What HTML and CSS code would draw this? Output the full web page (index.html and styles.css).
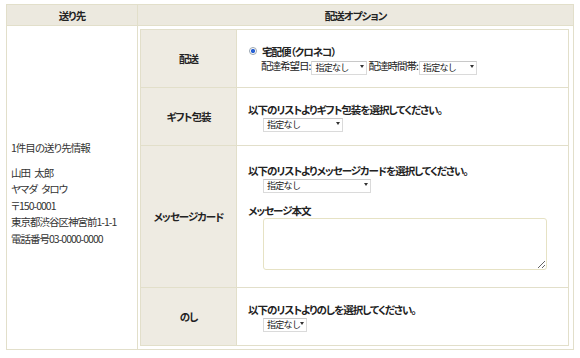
FILE: index.html
```html
<!DOCTYPE html>
<html lang="ja">
<head>
  <meta charset="UTF-8" />
  <title>配送オプション</title>
  <link rel="stylesheet" href="styles.css">
</head>
<body>
  <table class="outer">
    <tr>
      <th class="col-dest">送り先</th>
      <th>配送オプション</th>
    </tr>
    <tr>
      <td class="dest">
        <p class="dest-title">1件目の送り先情報</p>
        <p class="dest-addr">
          山田 太郎<br>
          ヤマダ タロウ<br>
          〒150-0001<br>
          東京都渋谷区神宮前1-1-1<br>
          電話番号03-0000-0000
        </p>
      </td>
      <td class="opt-cell">
        <table class="inner">
          <tr class="row-ship">
            <th>配送</th>
            <td>
              <label class="radio-line"><input type="radio" checked>宅配便（クロネコ）</label>
              <div class="ship-line">
                <span>配達希望日:</span>
                <span class="sel w56"><select><option>指定なし</option></select></span>
                <span>配達時間帯:</span>
                <span class="sel w58"><select><option>指定なし</option></select></span>
              </div>
            </td>
          </tr>
          <tr class="row-gift">
            <th>ギフト包装</th>
            <td>
              <p class="lead">以下のリストよりギフト包装を選択してください。</p>
              <span class="sel w80 indent"><select><option>指定なし</option></select></span>
            </td>
          </tr>
          <tr class="row-card">
            <th>メッセージカード</th>
            <td>
              <p class="lead">以下のリストよりメッセージカードを選択してください。</p>
              <span class="sel w108 indent"><select><option>指定なし</option></select></span>
              <p class="lead msg-title">メッセージ本文</p>
              <textarea class="msg indent"></textarea>
            </td>
          </tr>
          <tr class="row-noshi">
            <th>のし</th>
            <td>
              <p class="lead">以下のリストよりのしを選択してください。</p>
              <span class="sel w44 indent"><select><option>指定なし</option></select></span>
            </td>
          </tr>
        </table>
      </td>
    </tr>
  </table>
</body>
</html>
```
FILE: styles.css
```css
body {
  margin: 0;
  padding: 4px 0 0 6px;
  background: #ffffff;
  font-family: "Noto Sans CJK JP", sans-serif;
  font-size: 10.5px;
  font-feature-settings: "palt";
  letter-spacing: -1px;
  color: #222222;
}

table {
  border-collapse: collapse;
}

.outer {
  width: 568px;
  border: 1px solid #e2dfca;
}

.outer > tbody > tr > th {
  height: 20px;
  padding: 0;
  background: #ece9df;
  border: 1px solid #e2dfca;
  font-weight: bold;
}

.col-dest {
  width: 130px;
}

.dest {
  border: 1px solid #e2dfca;
  padding: 12px 0 0 4px;
  line-height: 16.5px;
  vertical-align: middle;
  color: #333333;
  word-spacing: 3px;
}

.dest p {
  margin: 0;
}

.dest-title {
  margin-bottom: 8px !important;
}

.opt-cell {
  padding: 3px 4px 3px 2px;
  border: 1px solid #e2dfca;
}

.inner {
  width: 429px;
  border: 1px solid #e2dfca;
}

.inner th {
  width: 95px;
  padding: 0;
  background: #eeebe2;
  border: 1px solid #e2dfca;
  font-weight: bold;
}

.inner td {
  padding: 0 0 0 11px;
  border: 1px solid #e2dfca;
  vertical-align: middle;
}

.row-ship th, .row-ship td,
.row-gift th, .row-gift td,
.row-noshi th, .row-noshi td {
  height: 57px;
}

.row-card th, .row-card td {
  height: 141px;
}

.radio-line {
  display: flex;
  align-items: center;
  gap: 5px;
  font-weight: bold;
  height: 13px;
}

.radio-line input {
  appearance: none;
  margin: 0 0 0 1px;
  width: 8px;
  height: 8px;
  border: 1px solid #98a4b0;
  border-radius: 50%;
  background: radial-gradient(circle, #2a62d4 0 1.8px, #ffffff 2.4px);
}

.ship-line {
  padding-left: 13px;
  height: 14px;
  margin-top: 1px;
  display: flex;
  align-items: center;
  gap: 1px;
}

.lead {
  margin: 0;
  font-weight: bold;
  line-height: 13px;
}

.msg-title {
  margin-top: 13px;
}

.indent {
  margin-left: 15px;
}

.sel {
  position: relative;
  display: block;
  height: 14px;
}

.ship-line .sel {
  display: inline-block;
}

.sel select {
  appearance: none;
  width: 100%;
  height: 14px;
  margin: 0;
  padding: 0 0 0 3px;
  border: 1px solid #dadada;
  border-top-color: #c8c8c8;
  background: #ffffff;
  font-family: inherit;
  font-size: 9px;
  letter-spacing: -0.7px;
  line-height: 12px;
  color: #222222;
}

.sel::after {
  content: "";
  position: absolute;
  right: 3px;
  top: 6px;
  border-left: 2.5px solid transparent;
  border-right: 2.5px solid transparent;
  border-top: 3px solid #333333;
}

.w44 { width: 44px; }
.w56 { width: 56px; }
.w58 { width: 58px; }
.w80 { width: 80px; }
.w108 { width: 108px; }

.msg {
  display: block;
  width: 284px;
  height: 52px;
  margin-top: 1px;
  box-sizing: border-box;
  border: 1px solid #e6e2c4;
  border-radius: 3px;
  resize: both;
}
```
